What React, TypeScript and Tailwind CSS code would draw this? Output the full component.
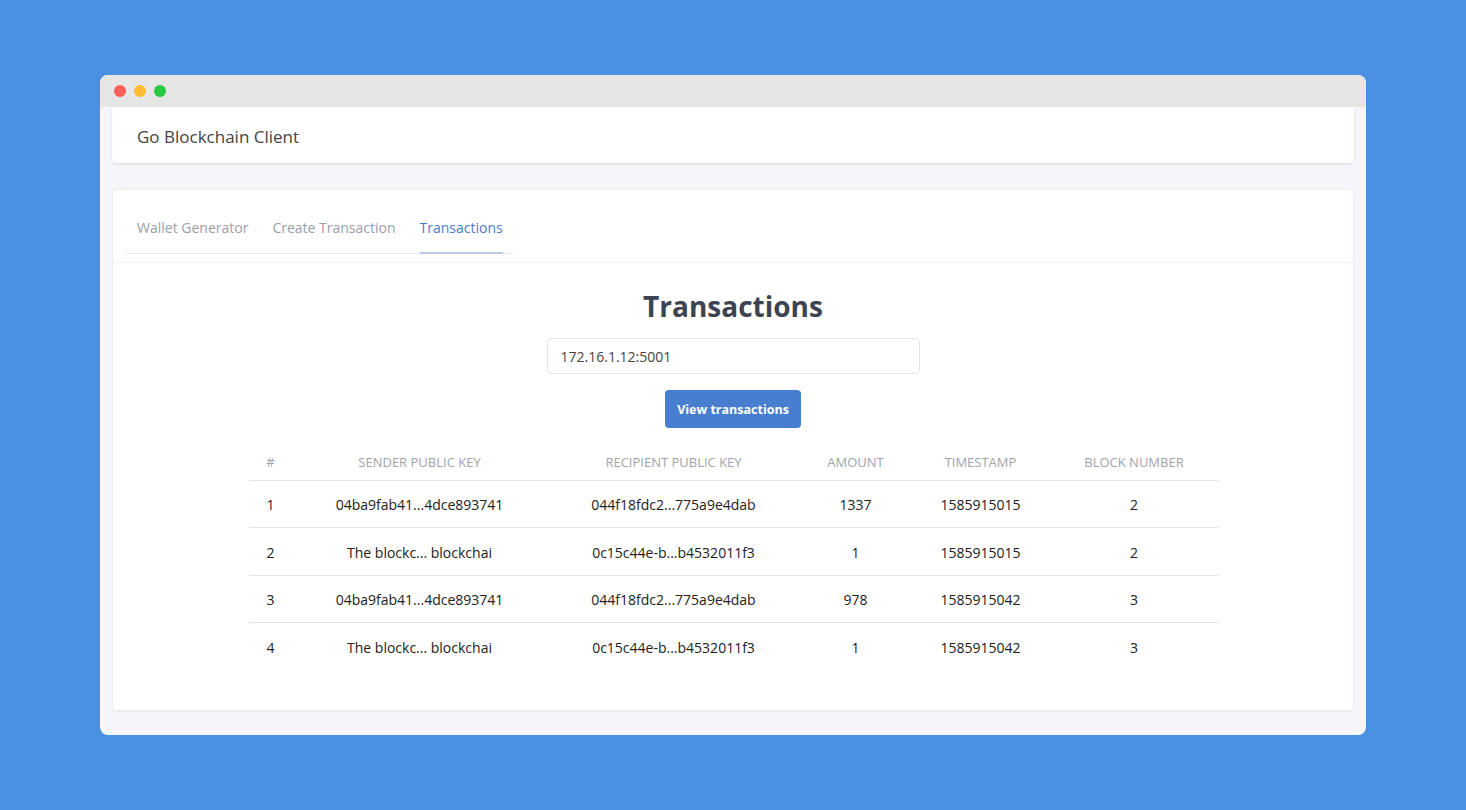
import React from 'react'

const rows = [
  { n: 1, sender: '04ba9fab41...4dce893741', recipient: '044f18fdc2...775a9e4dab', amount: '1337', ts: '1585915015', block: '2' },
  { n: 2, sender: 'The blockc... blockchai', recipient: '0c15c44e-b...b4532011f3', amount: '1', ts: '1585915015', block: '2' },
  { n: 3, sender: '04ba9fab41...4dce893741', recipient: '044f18fdc2...775a9e4dab', amount: '978', ts: '1585915042', block: '3' },
  { n: 4, sender: 'The blockc... blockchai', recipient: '0c15c44e-b...b4532011f3', amount: '1', ts: '1585915042', block: '3' },
]

export default function App() {
  return (
    <div className="w-[1466px] h-[810px] bg-[#4a90e2] pt-[75px] pl-[100px] font-['Open_Sans',sans-serif]">
      <div className="w-[1266px] h-[660px] rounded-lg bg-[#f4f6fa] overflow-hidden flex flex-col">
        <div className="h-[32px] bg-[#e6e6e6] flex items-center gap-2 pl-[14px] shrink-0">
          <span className="w-3 h-3 rounded-full bg-[#ff5f57]" />
          <span className="w-3 h-3 rounded-full bg-[#febc2e]" />
          <span className="w-3 h-3 rounded-full bg-[#28c840]" />
        </div>
        <div className="px-[12px]">
          <div className="h-[56px] bg-white rounded-b shadow-[0_1px_3px_rgba(0,0,0,0.12)] flex items-center pl-[25px] pt-[4px]">
            <span className="text-[17px] text-[#444]">Go Blockchain Client</span>
          </div>
          <div className="mt-[26px] h-[522px] bg-white rounded border border-[#eceef2] shadow-[0_1px_2px_rgba(0,0,0,0.06)]">
            <div className="border-b border-[#f0f1f3] h-[73px] pl-[12px] pt-[16px]">
              <div className="flex gap-6 w-[386px] border-b border-[#e8eaee] px-[12px] h-[48px] whitespace-nowrap">
                <span className="text-[14px] text-[#9aa0aa] pt-[11px]">Wallet Generator</span>
                <span className="text-[14px] text-[#9aa0aa] pt-[11px]">Create Transaction</span>
                <span className="text-[14px] text-[#4a7bd0] pt-[11px] border-b-2 border-[#b8c9e8] -mb-px">Transactions</span>
              </div>
            </div>
            <div className="flex flex-col items-center">
              <h1 className="text-[28px] font-bold text-[#3d4451] mt-[23px] leading-[40px]">Transactions</h1>
              <input
                readOnly
                value="172.16.1.12:5001"
                className="mt-[12px] w-[373px] h-[36px] border border-[#e1e3ea] rounded px-[13px] text-[14px] text-[#444] outline-none"
              />
              <button className="mt-[16px] w-[136px] h-[38px] bg-[#477ecf] rounded text-white text-[12.5px] font-bold pt-[3px]">
                View transactions
              </button>
              <table className="mt-[18px] w-[969px] text-center table-fixed">
                <colgroup>
                  <col className="w-[44px]" />
                  <col className="w-[254px]" />
                  <col className="w-[254px]" />
                  <col className="w-[110px]" />
                  <col className="w-[140px]" />
                  <col className="w-[167px]" />
                </colgroup>
                <thead>
                  <tr className="border-b border-[#e2e4e8] h-[34px] text-[13px] text-[#a0a4ab] uppercase">
                    <th className="font-normal">#</th>
                    <th className="font-normal">Sender public key</th>
                    <th className="font-normal">Recipient public key</th>
                    <th className="font-normal">Amount</th>
                    <th className="font-normal">Timestamp</th>
                    <th className="font-normal">Block number</th>
                  </tr>
                </thead>
                <tbody className="text-[14px] text-[#222]">
                  {rows.map((r, i) => (
                    <tr key={r.n} className={(i < rows.length - 1 ? 'border-b border-[#e2e4e8] ' : '') + 'h-[47.5px]'}>
                      <td className="pt-[2px]">{r.n}</td>
                      <td className="pt-[2px]">{r.sender}</td>
                      <td className="pt-[2px]">{r.recipient}</td>
                      <td className="pt-[2px]">{r.amount}</td>
                      <td className="pt-[2px]">{r.ts}</td>
                      <td className="pt-[2px]">{r.block}</td>
                    </tr>
                  ))}
                </tbody>
              </table>
            </div>
          </div>
        </div>
      </div>
    </div>
  )
}
